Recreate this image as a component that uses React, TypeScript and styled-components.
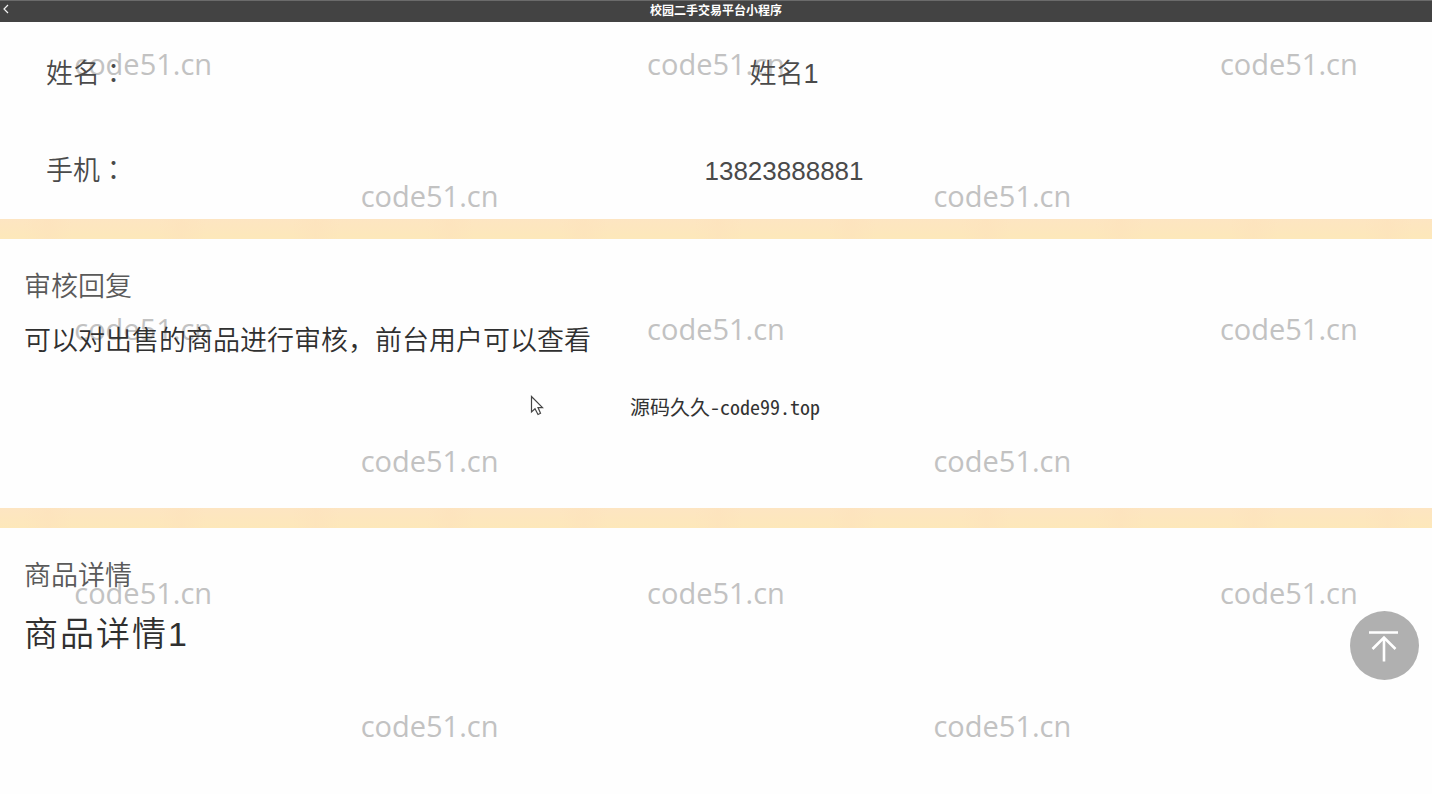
import React from "react";
import styled, { createGlobalStyle } from "styled-components";

const GlobalStyle = createGlobalStyle`
  * { box-sizing: border-box; }
  body {
    margin: 0;
    background: #fefefe;
    font-family: "Liberation Sans", "Noto Sans CJK SC", sans-serif;
    color: #4a4a4a;
  }
  h1, h2, p, dl, dt, dd { margin: 0; font-weight: 350; }
`;

const Page = styled.div`
  position: relative;
  isolation: isolate;
  display: flex;
  flex-direction: column;
  min-height: 100vh;
`;

const TopBar = styled.header`
  display: grid;
  grid-template-columns: 1fr auto 1fr;
  align-items: start;
  height: 22px;
  background: #434343;
  border-top: 1px solid #6b6b6b;
`;

const BackButton = styled.button`
  display: flex;
  justify-self: start;
  padding: 3px 2px;
  border: 0;
  background: none;
  color: #f4f4f4;
`;

const BarTitle = styled.h1`
  && { font-weight: 700; }
  font-size: 12px;
  line-height: 20px;
  color: #fff;
`;

const WatermarkLayer = styled.div`
  position: absolute;
  inset: 0;
  z-index: -1;
  display: grid;
  grid-template-columns: repeat(5, 1fr);
  grid-template-rows: repeat(6, 1fr);
  place-items: center;
  overflow: hidden;
  pointer-events: none;
  font-family: "Open Sans", "Noto Sans", sans-serif;
  font-size: 29px;
  line-height: 40px;
  color: #c2c2c2;
`;

const Watermark = styled.span`
  padding-bottom: 4px;
`;

const ContactList = styled.dl`
  padding-top: 3px;
`;

const ContactRow = styled.div`
  display: flex;
  align-items: baseline;
  height: 97px;
  padding: 29px 0 0 46px;
  font-size: 27px;
  line-height: 40px;
`;

const ContactLabel = styled.dt`
  width: 90px;
`;

const Colon = styled.span`
  font-family: "Noto Sans CJK JP", sans-serif;
  line-height: 1;
`;

const ContactValue = styled.dd<{ $numeric?: boolean }>`
  flex: 1;
  font-size: ${(p) => (p.$numeric ? "26px" : "27px")};
  text-align: center;
`;

const Divider = styled.div`
  height: 20px;
  background:
    repeating-linear-gradient(90deg, transparent 0 24px, #fde2bc80 48px, transparent 72px 134px),
    linear-gradient(#fde5c2, #fde8ba);
`;

const Section = styled.section<{ $tall?: boolean }>`
  min-height: ${(p) => (p.$tall ? "269px" : "200px")};
  padding: 32px 24px 0;
`;

const SectionTitle = styled.h2`
  font-size: 27px;
  line-height: 32px;
  color: #5a5a5a;
`;

const ReplyText = styled.p`
  margin-top: 18px;
  font-size: 27px;
  line-height: 40px;
  color: #303030;
`;

const DetailText = styled.p`
  margin-top: 18px;
  font-size: 34px;
  line-height: 48px;
  letter-spacing: 2px;
  color: #303030;
`;

const SourceNote = styled.p`
  position: absolute;
  top: 393px;
  left: 44%;
  font-family: "Noto Sans Mono CJK SC", "Noto Sans CJK SC", monospace;
  font-size: 20px;
  line-height: 28px;
  color: #333;
`;

const Pointer = styled.svg`
  position: absolute;
  top: 395px;
  left: 37%;
`;

const BackToTop = styled.button`
  position: fixed;
  right: 13px;
  bottom: 114px;
  display: grid;
  place-items: center;
  width: 69px;
  height: 69px;
  padding: 0;
  border: 0;
  border-radius: 50%;
  background: #b0b0b0;
  color: #fff;
`;

const CELLS = Array.from({ length: 30 }, (_, i) => i);

export default function App() {
  return (
    <Page>
      <GlobalStyle />
      <WatermarkLayer aria-hidden="true">
        {CELLS.map((i) => (
          <Watermark key={i}>{i % 2 === 0 ? "code51.cn" : ""}</Watermark>
        ))}
      </WatermarkLayer>
      <TopBar>
        <BackButton type="button" aria-label="返回">
          <svg width="8" height="10" viewBox="0 0 8 10" fill="none" stroke="currentColor" strokeWidth="1.2">
            <path d="M6 1 L2 5 L6 9" />
          </svg>
        </BackButton>
        <BarTitle>校园二手交易平台小程序</BarTitle>
      </TopBar>
      <ContactList>
        <ContactRow>
          <ContactLabel>姓名<Colon>：</Colon></ContactLabel>
          <ContactValue>姓名1</ContactValue>
        </ContactRow>
        <ContactRow>
          <ContactLabel>手机<Colon>：</Colon></ContactLabel>
          <ContactValue $numeric>13823888881</ContactValue>
        </ContactRow>
      </ContactList>
      <Divider />
      <Section $tall>
        <SectionTitle>审核回复</SectionTitle>
        <ReplyText>可以对出售的商品进行审核，前台用户可以查看</ReplyText>
      </Section>
      <Divider />
      <Section>
        <SectionTitle>商品详情</SectionTitle>
        <DetailText>商品详情1</DetailText>
      </Section>
      <SourceNote>源码久久-code99.top</SourceNote>
      <Pointer width="16" height="22" viewBox="0 0 16 22" fill="#fff" stroke="#444" strokeWidth="1.2">
        <path d="M1.5 1.5 V17 L5 13.8 L8 19.5 L10.5 18.3 L8 12.6 H12.5 Z" />
      </Pointer>
      <BackToTop type="button" aria-label="回到顶部">
        <svg width="69" height="69" viewBox="0 0 69 69" fill="none" stroke="currentColor" strokeWidth="2.6">
          <path d="M19 21.5 H48 M34 50.5 V27 M22.5 38 L34 26.5 L45.5 38" />
        </svg>
      </BackToTop>
    </Page>
  );
}
